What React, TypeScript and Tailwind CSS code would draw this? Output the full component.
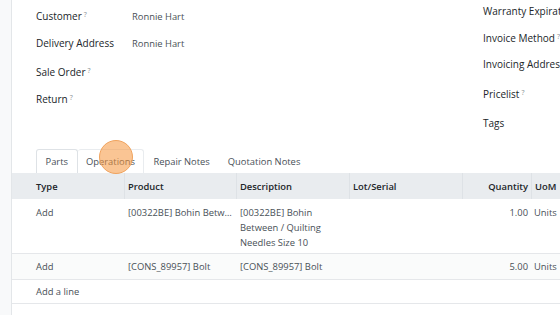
const cols = 'grid grid-cols-[112px_112px_113px_113px_69px_1fr]';

function Q() {
  return <sup className="ml-[2px] text-[7px] font-normal text-[#8a8f94]">?</sup>;
}

function Field({ label, help, value, className }: { label: string; help?: boolean; value?: string; className?: string }) {
  return (
    <div className={`flex ${className ?? ''}`}>
      <div className="w-[96px] shrink-0 text-[10px] font-medium text-[#212529]">
        {label}
        {help && <Q />}
      </div>
      {value && <div className="text-[#495057]">{value}</div>}
    </div>
  );
}

const rows = [
  {
    type: 'Add',
    product: '[00322BE] Bohin Between / Quilting Needles Size 10',
    description: ['[00322BE] Bohin', 'Between / Quilting', 'Needles Size 10'],
    qty: '1.00',
    uom: 'Units',
    pad: 'pt-[6px] pb-[3px]',
  },
  {
    type: 'Add',
    product: '[CONS_89957] Bolt',
    description: ['[CONS_89957] Bolt'],
    qty: '5.00',
    uom: 'Units',
    pad: 'py-[5px] bg-[#fafbfb]',
  },
];

export default function App() {
  return (
    <div
      className="flex h-[315px] w-[560px] overflow-hidden bg-white text-[9.4px] leading-[15px] text-[#495057]"
      style={{ fontFamily: '"Open Sans", "Noto Sans", sans-serif' }}
    >
      <div className="w-[12px] shrink-0 border-r border-[#e3e6e9] bg-[#f8f9fa]" />
      <div className="relative flex min-w-0 flex-1 flex-col">
        {/* header fields */}
        <div className="flex h-[148px]">
          <div className="flex w-[471px] shrink-0 flex-col pl-[24px] pt-[9px]">
            <Field label="Customer" help value="Ronnie Hart" />
            <Field label="Delivery Address" value="Ronnie Hart" className="mt-[12px]" />
            <Field label="Sale Order" help className="mt-[14px]" />
            <Field label="Return" help className="mt-[12px]" />
          </div>
          <div className="flex flex-col whitespace-nowrap pt-[4px] text-[10px] font-medium text-[#212529]">
            <div>Warranty Expiration</div>
            <div className="mt-[12px]">Invoice Method<Q /></div>
            <div className="mt-[11px]">Invoicing Address</div>
            <div className="mt-[15px]">Pricelist<Q /></div>
            <div className="mt-[14px]">Tags</div>
          </div>
        </div>

        {/* tabs */}
        <div className="flex h-[25px] pl-[24px] pt-[1px] text-[#495057]">
          <div className="flex items-center rounded-t-[3px] border border-b-0 border-[#dee2e6] bg-white px-[8.5px]">Parts</div>
          <div className="flex items-center rounded-t-[3px] border border-b-0 border-l-0 border-[#e9ecef] px-[8.5px]">Operations</div>
          <div className="flex items-center px-[9px]">Repair Notes</div>
          <div className="flex items-center whitespace-nowrap px-[9px]">Quotation Notes</div>
        </div>

        {/* table */}
        <div className="w-[560px]">
          <div className={`${cols} h-[26px] items-center bg-[#e9ecef] font-semibold text-[#212529]`}>
            <div className="flex h-full items-center pl-[24px]">Type</div>
            <div className="flex h-full items-center border-l border-[#dee2e6] pl-[3px]">Product</div>
            <div className="flex h-full items-center border-l border-[#dee2e6] pl-[3px]">Description</div>
            <div className="flex h-full items-center border-l border-[#dee2e6] pl-[3px]">Lot/Serial</div>
            <div className="flex h-full items-center justify-end border-l border-[#dee2e6] pr-[3px]">Quantity</div>
            <div className="flex h-full items-center border-l border-[#dee2e6] pl-[3px]">UoM</div>
          </div>
          {rows.map((r, i) => (
            <div key={i} className={`${cols} border-b border-[#e5e7ea] ${r.pad}`}>
              <div className="pl-[24px]">{r.type}</div>
              <div className="truncate pl-[4px] pr-[3px]">{r.product}</div>
              <div className="pl-[4px]">
                {r.description.map((d) => (
                  <div key={d}>{d}</div>
                ))}
              </div>
              <div />
              <div className="pr-[3px] text-right">{r.qty}</div>
              <div className="pl-[3px]">{r.uom}</div>
            </div>
          ))}
          <div className="h-[24px] border-b border-[#e5e7ea] py-[4px] pl-[24px]">Add a line</div>
        </div>

        {/* click highlight */}
        <div className="absolute left-[87px] top-[140px] h-[34px] w-[34px] rounded-full border border-[#f0a35e] bg-[rgba(245,150,60,0.55)]" />
      </div>
    </div>
  );
}
